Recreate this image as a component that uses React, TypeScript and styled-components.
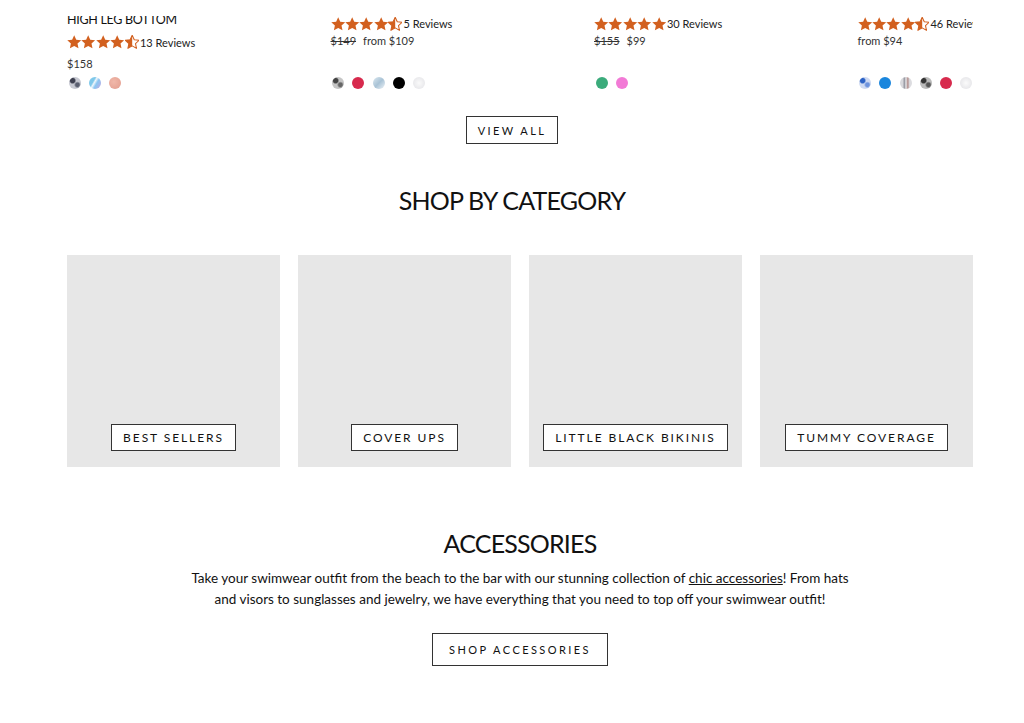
import * as React from "react";
import styled, { createGlobalStyle } from "styled-components";

const GlobalStyle = createGlobalStyle`
    body {
        margin: 0;
        background: #fff;
        color: #111;
        font-family: Lato, "Liberation Sans", sans-serif;
    }
`;

const STAR = "M12 2.2l2.95 6.36 6.95.78-5.17 4.7 1.42 6.86L12 17.4l-6.15 3.5 1.42-6.86L2.1 9.34l6.95-.78z";
const ORANGE = "#d2601f";

const Page = styled.div`
    width: 1024px;
    padding-bottom: 60px;
`;

// product carousel, scrolled so the first title is cut by the top edge
const Track = styled.div`
    margin: 16px 0 0 67px;
    width: 906px;
    height: 73px;
    overflow: hidden;
    display: grid;
    grid-auto-flow: column;
    grid-auto-columns: 245px;
    column-gap: 18.5px;
`;

const Card = styled.div`
    display: flex;
    flex-direction: column;
    justify-content: flex-end;
    min-height: 0;
`;

const ProductTitle = styled.div`
    font-size: 12.5px;
    line-height: 16px;
    letter-spacing: -0.3px;
    text-transform: uppercase;
    white-space: nowrap;
`;

const Rating = styled.div<{ $mt: number }>`
    display: flex;
    align-items: center;
    height: 16px;
    margin-top: ${(p) => p.$mt}px;
    white-space: nowrap;
`;

const Stars = styled.div`
    display: flex;
    margin-right: 1px;
`;

const Reviews = styled.span`
    font-size: 11px;
    color: #222;
`;

const Price = styled.div<{ $mt: number; $mb: number }>`
    font-size: 11px;
    line-height: 14px;
    color: #333;
    margin-top: ${(p) => p.$mt}px;
    margin-bottom: ${(p) => p.$mb}px;
`;

const Was = styled.s`
    margin-right: 7px;
`;

const Swatches = styled.div`
    display: flex;
    gap: 8.3px;
    height: 12px;
    padding-left: 1.5px;
`;

const Swatch = styled.span<{ $bg: string }>`
    width: 12px;
    height: 12px;
    border-radius: 50%;
    background: ${(p) => p.$bg};
`;

const Center = styled.div<{ $mt: number }>`
    display: flex;
    justify-content: center;
    margin-top: ${(p) => p.$mt}px;
`;

const OutlineButton = styled.a<{ $size: number; $h: number; $pad: number; $ls: number }>`
    display: inline-flex;
    align-items: center;
    justify-content: center;
    height: ${(p) => p.$h}px;
    padding: 0 ${(p) => p.$pad}px;
    box-sizing: border-box;
    border: 1px solid #333;
    background: #fff;
    color: #111;
    font-size: ${(p) => p.$size}px;
    letter-spacing: ${(p) => p.$ls}em;
    text-transform: uppercase;
    text-decoration: none;
`;

const Heading = styled.h2<{ $mt: number }>`
    margin: ${(p) => p.$mt}px 0 0;
    font-size: 25px;
    font-weight: 400;
    line-height: 32px;
    text-align: center;
    text-transform: uppercase;
    letter-spacing: -0.8px;
`;

const CategoryGrid = styled.div`
    margin: 39px 0 0 67px;
    width: 906px;
    display: grid;
    grid-template-columns: repeat(4, 213px);
    column-gap: 18px;
`;

const CategoryCard = styled.div`
    height: 212px;
    background: #e7e7e7;
    display: flex;
    align-items: flex-end;
    justify-content: center;
    padding-bottom: 16px;
    box-sizing: border-box;
`;

const Accessories = styled.section`
    margin-left: 67px;
    width: 906px;
    display: flex;
    flex-direction: column;
    align-items: center;
`;

const Blurb = styled.p`
    margin: 9px 0 23px;
    width: 680px;
    font-size: 13.5px;
    line-height: 21px;
    text-align: center;
    color: #111;

    a {
        color: inherit;
    }
`;

const StarIcon = ({ half }: { half?: boolean }) => (
    <svg width="14.4" height="14" viewBox="1.7 1.8 20.6 20">
        {half ? (
            <>
                <defs>
                    <clipPath id="half-star">
                        <rect x="0" y="0" width="12" height="24" />
                    </clipPath>
                </defs>
                <path d={STAR} fill="none" stroke={ORANGE} strokeWidth="1.5" strokeLinejoin="round" />
                <path d={STAR} fill={ORANGE} clipPath="url(#half-star)" />
            </>
        ) : (
            <path d={STAR} fill={ORANGE} />
        )}
    </svg>
);

const marble = (a: string, b: string, c: string) =>
    `radial-gradient(circle at 30% 30%, ${a} 0 18%, transparent 30%), radial-gradient(circle at 70% 65%, ${b} 0 15%, transparent 30%), ${c}`;

interface IProduct {
    title?: string;
    rating: number;
    reviews: number;
    was?: string;
    price: string;
    ratingTop: number;
    priceGap: number;
    swatchGap: number;
    swatches: string[];
}

const products: IProduct[] = [
    {
        title: "High Leg Bottom",
        rating: 4.5,
        reviews: 13,
        price: "$158",
        ratingTop: 7,
        priceGap: 8,
        swatchGap: 6,
        swatches: [
            marble("#3e4050", "#5a5f70", "#c7c9d2"),
            "linear-gradient(120deg, #7fc8ea 0 35%, #f3f7fb 45%, #8ac6f2 60%, #c7a7e0 100%)",
            "radial-gradient(circle at 40% 40%, #f0b8aa, #e29c8d)",
        ],
    },
    {
        rating: 4.5,
        reviews: 5,
        was: "$149",
        price: "from $109",
        ratingTop: 0,
        priceGap: 3,
        swatchGap: 29,
        swatches: [
            marble("#444", "#666", "#c5c5c5"),
            "#d72a4d",
            "linear-gradient(135deg, #dbe8f0, #a9c3d6 50%, #eef3f7)",
            "#000",
            "radial-gradient(circle, #fafafa, #e2e2e6)",
        ],
    },
    {
        rating: 5,
        reviews: 30,
        was: "$155",
        price: "$99",
        ratingTop: 0,
        priceGap: 3,
        swatchGap: 29,
        swatches: ["#3bab7b", "#f27ad6"],
    },
    {
        rating: 4.5,
        reviews: 46,
        price: "from $94",
        ratingTop: 0,
        priceGap: 3,
        swatchGap: 29,
        swatches: [
            marble("#2d63c6", "#6d93de", "#cfdaf2"),
            "#1a86dd",
            "linear-gradient(90deg, #d8d8dc 0 25%, #8c8e98 35%, #e8e8ea 50%, #b08c8a 65%, #dcdce0 80%)",
            marble("#333", "#555", "#bbb"),
            "#d72a4d",
            "radial-gradient(circle, #fbfbfb, #e0e0e4)",
        ],
    },
];

const categories = ["Best Sellers", "Cover Ups", "Little Black Bikinis", "Tummy Coverage"];

export default class App extends React.Component {
    public render() {
        return (
            <Page>
                <GlobalStyle />
                <Track>
                    {products.map((p, i) => (
                        <Card key={i}>
                            {p.title && <ProductTitle>{p.title}</ProductTitle>}
                            <Rating $mt={p.ratingTop}>
                                <Stars>
                                    {[0, 1, 2, 3, 4].map((s) => (
                                        <StarIcon key={s} half={p.rating - s === 0.5} />
                                    ))}
                                </Stars>
                                <Reviews>{p.reviews} Reviews</Reviews>
                            </Rating>
                            <Price $mt={p.priceGap} $mb={p.swatchGap}>
                                {p.was && <Was>{p.was}</Was>}
                                {p.price}
                            </Price>
                            <Swatches>
                                {p.swatches.map((bg, j) => (
                                    <Swatch key={j} $bg={bg} />
                                ))}
                            </Swatches>
                        </Card>
                    ))}
                </Track>

                <Center $mt={27}>
                    <OutlineButton href="#" $size={11} $h={28} $pad={11} $ls={0.22}>
                        View All
                    </OutlineButton>
                </Center>

                <Heading $mt={40}>Shop by Category</Heading>

                <CategoryGrid>
                    {categories.map((c) => (
                        <CategoryCard key={c}>
                            <OutlineButton href="#" $size={12} $h={27} $pad={11} $ls={0.16}>
                                {c}
                            </OutlineButton>
                        </CategoryCard>
                    ))}
                </CategoryGrid>

                <Accessories>
                    <Heading $mt={60}>Accessories</Heading>
                    <Blurb>
                        Take your swimwear outfit from the beach to the bar with our stunning collection of{" "}
                        <a href="#">chic accessories</a>! From hats and visors to sunglasses and jewelry, we have
                        everything that you need to top off your swimwear outfit!
                    </Blurb>
                    <OutlineButton href="#" $size={11} $h={33} $pad={16} $ls={0.22}>
                        Shop Accessories
                    </OutlineButton>
                </Accessories>
            </Page>
        );
    }
}
